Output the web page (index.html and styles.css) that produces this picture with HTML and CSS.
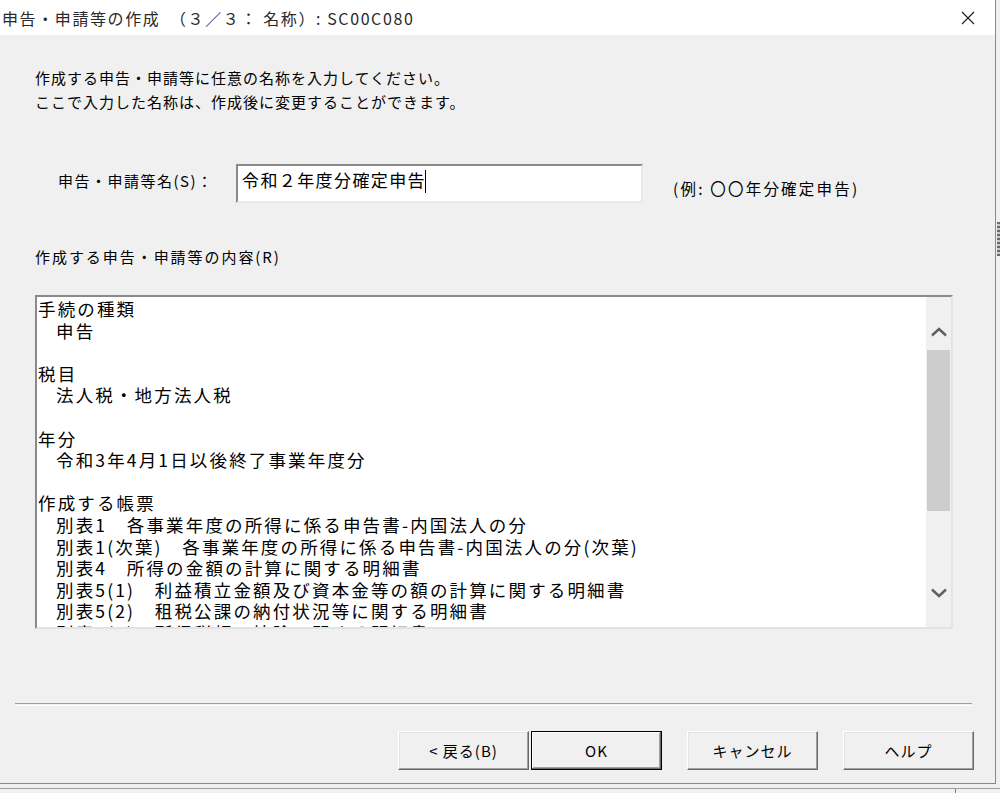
FILE: index.html
```html
<!DOCTYPE html>
<html lang="ja">
<head>
<meta charset="utf-8">
<title>申告・申請等の作成</title>
<link rel="stylesheet" href="styles.css">
</head>
<body>
<div class="screen">
  <div class="top-area">
    <div class="dialog">
      <div class="titlebar">
        <span class="title">申告・申請等の作成　（３／３： 名称）: SC00C080</span>
        <span class="close">
          <svg width="14" height="14" viewBox="0 0 14 14"><path d="M1 1 L13 13 M13 1 L1 13" stroke="#222" stroke-width="1.2" fill="none"/></svg>
        </span>
      </div>
      <div class="content">
        <p class="intro">作成する申告・申請等に任意の名称を入力してください。<br>ここで入力した名称は、作成後に変更することができます。</p>
        <div class="name-row">
          <span class="name-label">申告・申請等名(S)：</span>
          <div class="text-input"><span class="input-value">令和２年度分確定申告</span><span class="caret"></span></div>
          <span class="example">(例: 〇〇年分確定申告)</span>
        </div>
        <div class="section-label">作成する申告・申請等の内容(R)</div>
        <div class="listbox">
          <div class="list-text">
            <div class="line">手続の種類</div>
            <div class="line sub">申告</div>
            <div class="line blank"></div>
            <div class="line">税目</div>
            <div class="line sub">法人税・地方法人税</div>
            <div class="line blank"></div>
            <div class="line">年分</div>
            <div class="line sub">令和3年4月1日以後終了事業年度分</div>
            <div class="line blank"></div>
            <div class="line">作成する帳票</div>
            <div class="line sub">別表1　各事業年度の所得に係る申告書-内国法人の分</div>
            <div class="line sub">別表1(次葉)　各事業年度の所得に係る申告書-内国法人の分(次葉)</div>
            <div class="line sub">別表4　所得の金額の計算に関する明細書</div>
            <div class="line sub">別表5(1)　利益積立金額及び資本金等の額の計算に関する明細書</div>
            <div class="line sub">別表5(2)　租税公課の納付状況等に関する明細書</div>
            <div class="line sub">別表6(1)　所得税額の控除に関する明細書</div>
          </div>
          <div class="scrollbar">
            <div class="sb-up"><svg width="18" height="10" viewBox="0 0 18 10"><path d="M2 8.5 L9 2 L16 8.5" stroke="#606060" stroke-width="2.4" fill="none"/></svg></div>
            <div class="sb-thumb"></div>
            <div class="sb-track"></div>
            <div class="sb-down"><svg width="18" height="10" viewBox="0 0 18 10"><path d="M2 1.5 L9 8 L16 1.5" stroke="#606060" stroke-width="2.4" fill="none"/></svg></div>
          </div>
        </div>
        <div class="separator"></div>
        <div class="buttons">
          <div class="btn-pair">
            <button class="btn">&lt; 戻る(B)</button>
            <button class="btn default">OK</button>
          </div>
          <button class="btn">キャンセル</button>
          <button class="btn">ヘルプ</button>
        </div>
      </div>
    </div>
    <div class="side-strip"><span class="side-mark"></span></div>
  </div>
  <div class="bottom-strip">
    <div class="bottom-cell"></div>
    <div class="bottom-cell right"><span class="bottom-text">新</span></div>
  </div>
</div>
</body>
</html>
```

FILE: styles.css
```css
html, body {
  margin: 0;
  padding: 0;
}
body {
  background: #f0f0f0;
  font-family: "Noto Sans CJK JP", "Noto Sans", sans-serif;
  color: #000;
  overflow: hidden;
}
.screen {
  width: 1000px;
  height: 793px;
  display: flex;
  flex-direction: column;
  overflow: hidden;
}
.top-area {
  display: flex;
  height: 784px;
  flex: none;
}
.dialog {
  width: 995px;
  height: 783px;
  border-right: 1px solid #8a8a8a;
  border-bottom: 1px solid #8a8a8a;
  background: #f0f0f0;
  display: flex;
  flex-direction: column;
}
.side-strip {
  flex: 1;
  background: #f0f0f0;
  display: flex;
  flex-direction: column;
  padding-top: 222px;
}
.side-mark {
  display: block;
  width: 3px;
  height: 34px;
  margin-left: 1px;
  background: repeating-linear-gradient(#6a6a6a 0 2px, #c8c8c8 2px 4px);
}
.titlebar {
  height: 35px;
  background: #fff;
  display: flex;
  align-items: center;
  justify-content: space-between;
  flex: none;
}
.title {
  font-size: 16px;
  letter-spacing: 1.6px;
  color: #2a2a2a;
  padding-left: 2px;
  white-space: pre;
  line-height: 20px;
  margin-top: 1px;
}
.close {
  display: flex;
  width: 14px;
  height: 14px;
  margin-right: 20px;
  margin-top: 1px;
}
.content {
  flex: 1;
  display: flex;
  flex-direction: column;
  padding-left: 35px;
}
.intro {
  margin: 31px 0 0 0;
  font-size: 15px;
  line-height: 24px;
  letter-spacing: 1px;
}
.name-row {
  display: flex;
  align-items: flex-start;
  margin-top: 50px;
  padding-left: 23px;
  height: 39px;
}
.name-label {
  width: 178px;
  font-size: 15px;
  letter-spacing: 1.5px;
  line-height: 20px;
  margin-top: 7px;
}
.text-input {
  width: 403px;
  background: #fff;
  border-top: 2px solid #8a8a8a;
  border-left: 2px solid #8a8a8a;
  border-right: 2px solid #e8e8e8;
  border-bottom: 2px solid #e8e8e8;
  display: flex;
  align-items: flex-start;
  padding-top: 3px;
  box-sizing: content-box;
  height: 32px;
}
.input-value {
  font-size: 17px;
  letter-spacing: 1.4px;
  line-height: 22px;
  padding-left: 4px;
}
.caret {
  display: block;
  width: 1px;
  height: 23px;
  background: #000;
  margin-left: -1px;
  margin-top: 1px;
}
.example {
  margin-left: 30px;
  font-size: 15.5px;
  letter-spacing: 2.2px;
  line-height: 20px;
  margin-top: 14px;
}
.section-label {
  margin-top: 42px;
  font-size: 15px;
  letter-spacing: 1.95px;
  line-height: 24px;
}
.listbox {
  margin-top: 26px;
  width: 914px;
  height: 330px;
  border-top: 2px solid #8a8a8a;
  border-left: 2px solid #8a8a8a;
  border-right: 2px solid #e3e3e3;
  border-bottom: 2px solid #e3e3e3;
  background: #fff;
  display: flex;
  overflow: hidden;
}
.list-text {
  flex: 1;
  padding-top: 1px;
  padding-left: 1px;
  overflow: hidden;
}
.line {
  height: 21.6px;
  font-size: 17.5px;
  line-height: 21.6px;
  letter-spacing: 2.15px;
  white-space: pre;
}
.line.sub {
  padding-left: 18px;
}
.scrollbar {
  width: 25px;
  background: #f0f0f0;
  display: flex;
  flex-direction: column;
  align-items: center;
}
.sb-up {
  height: 53px;
  display: flex;
  align-items: flex-end;
  justify-content: center;
  padding-bottom: 13px;
  box-sizing: border-box;
}
.sb-thumb {
  width: 23px;
  height: 161px;
  background: #cdcdcd;
}
.sb-track {
  flex: 1;
}
.sb-down {
  height: 50px;
  display: flex;
  align-items: flex-start;
  justify-content: center;
  padding-top: 11px;
  box-sizing: border-box;
}
.separator {
  margin-top: 74px;
  margin-left: -20px;
  width: 957px;
  height: 1px;
  border-top: 1px solid #a0a0a0;
  border-bottom: 1px solid #fff;
}
.buttons {
  margin-top: 25px;
  display: flex;
  padding-left: 363px;
  gap: 25px;
}
.btn-pair {
  display: flex;
  gap: 2px;
}
.btn {
  width: 131px;
  height: 39px;
  background: #f0f0f0;
  font-family: "Noto Sans CJK JP", "Noto Sans", sans-serif;
  font-size: 15px;
  letter-spacing: 1px;
  color: #000;
  border-top: 1px solid #fff;
  border-left: 1px solid #fff;
  border-right: 1px solid #696969;
  border-bottom: 1px solid #696969;
  box-shadow: inset -1px -1px 0 #a0a0a0, inset 1px 1px 0 #e3e3e3;
  padding: 0;
  margin: 0;
  display: flex;
  align-items: center;
  justify-content: center;
}
.btn.default {
  border: 1px solid #000;
  box-shadow: inset -1px -1px 0 #696969, inset 1px 1px 0 #fff, inset -2px -2px 0 #a0a0a0;
}
.bottom-strip {
  flex: 1;
  display: flex;
  padding-top: 4px;
}
.bottom-cell {
  width: 955px;
  border-top: 1px solid #a0a0a0;
}
.bottom-cell.right {
  flex: 1;
  width: auto;
  border-left: 1px solid #808080;
  padding-left: 18px;
  overflow: hidden;
}
.bottom-text {
  font-size: 15px;
  line-height: 20px;
  display: block;
  margin-top: 2px;
}
```
